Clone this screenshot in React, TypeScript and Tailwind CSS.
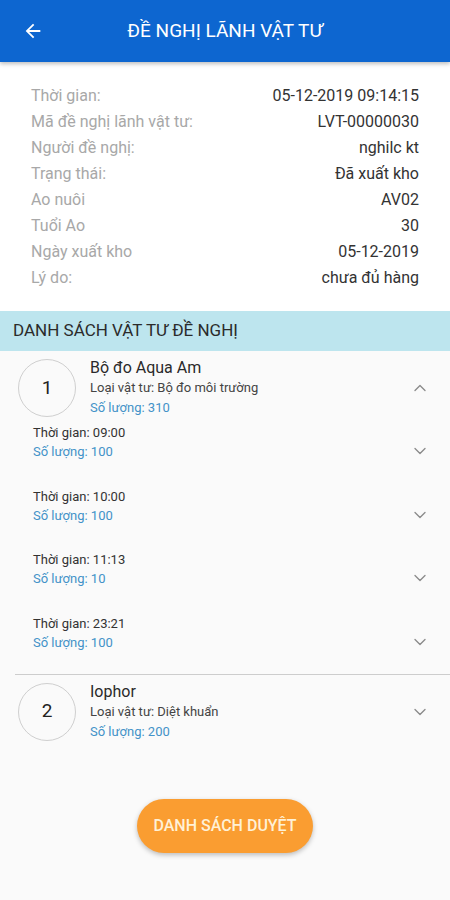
import React from 'react';
import { ChevronDown, ChevronUp } from 'lucide-react';

interface DetailRow {
    label: string;
    value: string;
}

interface Batch {
    time: string;
    qty: number;
}

interface Item {
    no: number;
    name: string;
    type: string;
    qty: number;
    open: boolean;
    batches: Batch[];
}

const details: DetailRow[] = [
    { label: 'Thời gian:', value: '05-12-2019 09:14:15' },
    { label: 'Mã đề nghị lãnh vật tư:', value: 'LVT-00000030' },
    { label: 'Người đề nghị:', value: 'nghilc kt' },
    { label: 'Trạng thái:', value: 'Đã xuất kho' },
    { label: 'Ao nuôi', value: 'AV02' },
    { label: 'Tuổi Ao', value: '30' },
    { label: 'Ngày xuất kho', value: '05-12-2019' },
    { label: 'Lý do:', value: 'chưa đủ hàng' },
];

const items: Item[] = [
    {
        no: 1,
        name: 'Bộ đo Aqua Am',
        type: 'Bộ đo môi trường',
        qty: 310,
        open: true,
        batches: [
            { time: '09:00', qty: 100 },
            { time: '10:00', qty: 100 },
            { time: '11:13', qty: 10 },
            { time: '23:21', qty: 100 },
        ],
    },
    { no: 2, name: 'Iophor', type: 'Diệt khuẩn', qty: 200, open: false, batches: [] },
];

const BackArrow = () => (
    <svg width="22" height="22" viewBox="0 0 24 24" fill="white">
        <path d="M20 11H7.83l5.59-5.59L12 4l-8 8 8 8 1.41-1.41L7.83 13H20v-2z" />
    </svg>
);

const ItemHeader: React.FC<{ item: Item }> = ({ item }) => (
    <div className="flex items-center pl-[18px] pr-[20px] pt-[7px]">
        <div className="w-[58px] h-[58px] rounded-full border border-[#cfcfcf] flex items-center justify-center text-[19px] text-[#222] shrink-0">
            {item.no}
        </div>
        <div className="ml-[14px] flex-1 flex flex-col">
            <div className="text-[16px] leading-[20px] text-[#2a2a2a]">{item.name}</div>
            <div className="text-[13px] leading-[20px] text-[#444]">Loại vật tư: {item.type}</div>
            <div className="text-[13px] leading-[20px] text-[#4392c8]">Số lượng: {item.qty}</div>
        </div>
        {item.open ? (
            <ChevronUp size={20} strokeWidth={1.6} color="#8a8a8a" />
        ) : (
            <ChevronDown size={20} strokeWidth={1.6} color="#8a8a8a" />
        )}
    </div>
);

export default function App() {
    return (
        <div className="w-[450px] min-h-[900px] bg-[#fafafa] flex flex-col" style={{ fontFamily: 'Roboto, "Noto Sans", sans-serif' }}>
            {/* Header */}
            <div className="h-[62px] bg-[#0d66d0] flex items-center px-[22px] shadow-[0_2px_4px_rgba(0,0,0,0.25)] relative z-10">
                <BackArrow />
                <div className="flex-1 text-center text-white text-[19px] pr-[22px]">ĐỀ NGHỊ LÃNH VẬT TƯ</div>
            </div>

            {/* Details */}
            <div className="bg-white pt-[21px] pb-[20px] pl-[31px] pr-[31px]">
                {details.map((row) => (
                    <div key={row.label} className="flex justify-between items-center h-[26px] text-[16px]">
                        <span className="text-[#a8a8a8]">{row.label}</span>
                        <span className="text-[#333]">{row.value}</span>
                    </div>
                ))}
            </div>

            {/* List title */}
            <div className="h-[40px] bg-[#bde5ee] flex items-center pl-[13px] text-[17px] text-[#2b2b2b]">
                DANH SÁCH VẬT TƯ ĐỀ NGHỊ
            </div>

            {/* Items */}
            {items.map((item, idx) => (
                <div key={item.no}>
                    {idx > 0 && <div className="ml-[15px] h-px bg-[#cdcdcd]" />}
                    <ItemHeader item={item} />
                    {item.open && (
                        <div className="flex flex-col gap-[25.5px] mt-[5px] mb-[22px] pl-[33px] pr-[20px]">
                            {item.batches.map((b) => (
                                <div key={b.time} className="flex justify-between items-end">
                                    <div className="flex flex-col">
                                        <span className="text-[13px] leading-[19px] text-[#333]">Thời gian: {b.time}</span>
                                        <span className="text-[13px] leading-[19px] text-[#4392c8]">Số lượng: {b.qty}</span>
                                    </div>
                                    <ChevronDown size={20} strokeWidth={1.6} color="#8a8a8a" />
                                </div>
                            ))}
                        </div>
                    )}
                </div>
            ))}

            {/* Button */}
            <div className="flex justify-center mt-[57px]">
                <button className="w-[176px] h-[54px] rounded-full bg-[#fa9d31] text-[#fff1d6] text-[16px] font-medium shadow-[0_2px_5px_rgba(0,0,0,0.25)]">
                    DANH SÁCH DUYỆT
                </button>
            </div>
        </div>
    );
}
